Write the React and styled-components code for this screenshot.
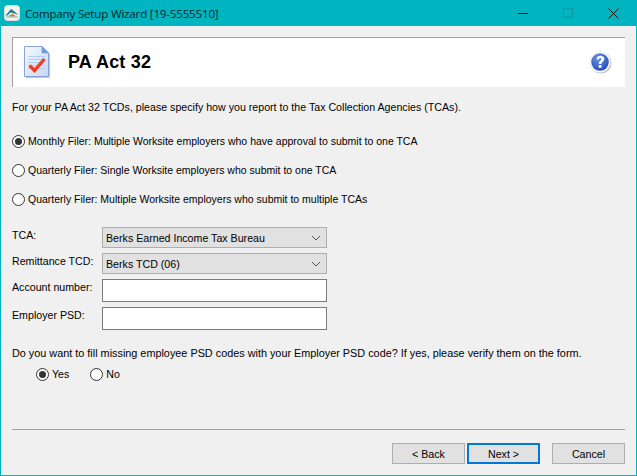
import React from 'react';
import styled, { createGlobalStyle } from 'styled-components';

const GlobalStyle = createGlobalStyle`
  html, body {
    margin: 0;
    padding: 0;
    background: #f0f0f0;
  }
`;

const filerOptions = [
  { label: 'Monthly Filer: Multiple Worksite employers who have approval to submit to one TCA', checked: true },
  { label: 'Quarterly Filer: Single Worksite employers who submit to one TCA' },
  { label: 'Quarterly Filer: Multiple Worksite employers who submit to multiple TCAs' },
];

const AppLogo = () => (
  <svg width="16" height="16" viewBox="0 0 16 16">
    <rect x="0.5" y="0.5" width="15" height="15" rx="3" fill="#f6f3ec" stroke="#d8dcd8" />
    <path d="M1.5 10.5 L7 4 L10 6 L14.5 10 L10.5 8.5 L6.5 7.5 L3.5 10.5 Z" fill="#1d7f9a" />
    <path d="M4.5 11 L8.5 8.8 L12.5 11.5 H5 Z" fill="#e8742a" />
    <path d="M2 11.5 H14 V12.5 H2 Z" fill="#7fb3c2" />
  </svg>
);

const PageIcon = () => (
  <svg width="27" height="33" viewBox="0 0 27 33">
    <defs>
      <linearGradient id="pageFill" x1="0" y1="0" x2="1" y2="1">
        <stop offset="0" stopColor="#f6faff" />
        <stop offset="1" stopColor="#c3d7f3" />
      </linearGradient>
    </defs>
    <path d="M0.5 0.5 H18 L24.5 7 V30.5 H0.5 Z" fill="url(#pageFill)" stroke="#88a4d8" strokeWidth="1" />
    <path d="M18 0.5 V7 H24.5 Z" fill="#6f9ee0" stroke="#6f93cf" strokeWidth="0.6" />
    <path d="M4 10.5 H21 M4 13.5 H21 M4 16.5 H21 M4 19.5 H21 M4 22.5 H21" stroke="#b5cdee" strokeWidth="1" />
    <path d="M5.5 19.5 L10.5 24.5 L20.5 13" fill="none" stroke="#ee3d22" strokeWidth="3.4" />
    <path d="M25.5 8 V31.5 H2" fill="none" stroke="#c4c4c4" strokeWidth="1" />
  </svg>
);

const HelpIcon = () => (
  <svg width="23" height="23" viewBox="0 0 23 23">
    <defs>
      <radialGradient id="helpFill" cx="0.4" cy="0.3" r="0.8">
        <stop offset="0" stopColor="#6d94e4" />
        <stop offset="1" stopColor="#1d46ae" />
      </radialGradient>
    </defs>
    <circle cx="12" cy="12" r="10.5" fill="#bcbcbc" />
    <circle cx="11" cy="11" r="10.5" fill="#fff" stroke="#dcdcdc" strokeWidth="0.5" />
    <circle cx="11" cy="11" r="8.8" fill="url(#helpFill)" />
    <path d="M7.6 8.2 C7.8 5.8 9.8 4.8 11.4 4.8 C13.8 4.8 15.3 6.2 15.3 8 C15.3 10.6 12.5 10.6 12.5 13 H9.8 C9.8 9.6 12.4 9.6 12.4 8.2 C12.4 7.5 11.9 7.1 11.2 7.1 C10.5 7.1 10 7.6 9.9 8.5 Z" fill="#fff" />
    <rect x="9.7" y="14" width="2.8" height="2.8" fill="#fff" />
  </svg>
);

const Chevron = () => (
  <svg width="10" height="6" viewBox="0 0 10 6">
    <path d="M1 1 L5 5 L9 1" fill="none" stroke="#555" strokeWidth="1" />
  </svg>
);

const Radio = ({ checked, children }) => (
  <RadioLabel>
    <RadioCircle $checked={checked} />
    <span>{children}</span>
  </RadioLabel>
);

const SelectField = ({ value }) => (
  <Select>
    <span>{value}</span>
    <Chevron />
  </Select>
);

const App = () => {
  return (
    <Window>
      <GlobalStyle />
      <TitleBar>
        <TitleLeft>
          <AppLogo />
          <TitleText>Company Setup Wizard [19-5555510]</TitleText>
        </TitleLeft>
        <WindowControls>
          <ControlButton>
            <svg width="11" height="11" viewBox="0 0 11 11"><path d="M0 5.5 H10" stroke="#111" strokeWidth="1" /></svg>
          </ControlButton>
          <ControlButton>
            <svg width="11" height="11" viewBox="0 0 11 11"><rect x="0.5" y="0.5" width="9" height="9" fill="none" stroke="#069aa5" /></svg>
          </ControlButton>
          <ControlButton>
            <svg width="11" height="11" viewBox="0 0 11 11"><path d="M0.5 0.5 L10.5 10.5 M10.5 0.5 L0.5 10.5" stroke="#111" strokeWidth="1" /></svg>
          </ControlButton>
        </WindowControls>
      </TitleBar>

      <Content>
        <Banner>
          <BannerLeft>
            <PageIcon />
            <BannerTitle>PA Act 32</BannerTitle>
          </BannerLeft>
          <HelpIcon />
        </Banner>

        <Intro>For your PA Act 32 TCDs, please specify how you report to the Tax Collection Agencies (TCAs).</Intro>

        <RadioStack>
          {filerOptions.map((option) => (
            <Radio key={option.label} checked={option.checked}>{option.label}</Radio>
          ))}
        </RadioStack>

        <FormGrid>
          <FieldLabel>TCA:</FieldLabel>
          <SelectField value="Berks Earned Income Tax Bureau" />
          <FieldLabel>Remittance TCD:</FieldLabel>
          <SelectField value="Berks TCD (06)" />
          <FieldLabel>Account number:</FieldLabel>
          <TextInput />
          <FieldLabel>Employer PSD:</FieldLabel>
          <TextInput />
        </FormGrid>

        <Question>Do you want to fill missing employee PSD codes with your Employer PSD code? If yes, please verify them on the form.</Question>
        <YesNoRow>
          <Radio checked>Yes</Radio>
          <Radio>No</Radio>
        </YesNoRow>

        <Footer>
          <Divider />
          <ButtonRow>
            <NavGroup>
              <WizardButton>&lt; Back</WizardButton>
              <WizardButton $primary>Next &gt;</WizardButton>
            </NavGroup>
            <WizardButton>Cancel</WizardButton>
          </ButtonRow>
        </Footer>
      </Content>
    </Window>
  );
};

const Window = styled.div`
  width: 637px;
  height: 476px;
  box-sizing: border-box;
  display: flex;
  flex-direction: column;
  overflow: hidden;
  background: #f0f0f0;
  border: 1px solid #00b4c0;
  border-top: 0;
  font-family: "Liberation Sans", Arial, sans-serif;
  font-size: 10.65px;
  color: #000;
`;

const TitleBar = styled.div`
  height: 26px;
  flex: none;
  display: flex;
  align-items: center;
  justify-content: space-between;
  background: #00b4c0;
`;

const TitleLeft = styled.div`
  display: flex;
  align-items: center;
  gap: 5px;
  padding-left: 3px;
`;

const TitleText = styled.span`
  font-family: "Open Sans", sans-serif;
  font-size: 11.6px;
  letter-spacing: -0.2px;
  color: #07262a;
`;

const WindowControls = styled.div`
  display: flex;
`;

const ControlButton = styled.div`
  width: 45px;
  height: 26px;
  display: flex;
  align-items: center;
  justify-content: center;
`;

const Content = styled.div`
  flex: 1;
  display: flex;
  flex-direction: column;
  padding: 11px 11px 11px;
`;

const Banner = styled.div`
  height: 50px;
  box-sizing: border-box;
  display: flex;
  align-items: center;
  justify-content: space-between;
  background: #fff;
  border-top: 1px solid #a0a0a0;
  border-left: 1px solid #a0a0a0;
  padding: 0 13px 0 11px;
`;

const BannerLeft = styled.div`
  display: flex;
  align-items: center;
  gap: 17px;
`;

const BannerTitle = styled.h1`
  margin: 0;
  font-size: 18px;
  font-weight: 700;
  letter-spacing: 0.2px;
`;

const Intro = styled.p`
  margin: 14px 0 0;
  line-height: 13px;
`;

const RadioStack = styled.div`
  display: flex;
  flex-direction: column;
  gap: 16px;
  margin-top: 21px;
  font-size: 10.5px;
`;

const RadioLabel = styled.label`
  display: flex;
  align-items: center;
  gap: 3px;
  height: 13px;
  line-height: 13px;
`;

const RadioCircle = styled.span`
  position: relative;
  width: 13px;
  height: 13px;
  flex: none;
  box-sizing: border-box;
  border: 1px solid #333;
  border-radius: 50%;
  background: #fff;

  &::after {
    content: '';
    display: ${(props) => (props.$checked ? 'block' : 'none')};
    position: absolute;
    inset: 2px;
    border-radius: 50%;
    background: #333;
  }
`;

const FormGrid = styled.div`
  display: grid;
  grid-template-columns: 90px 225px;
  grid-template-rows: 21px 21px 23px 23px;
  row-gap: 5px;
  margin-top: 21px;
`;

const FieldLabel = styled.div`
  line-height: 13px;
  padding-top: 2px;
`;

const Select = styled.div`
  box-sizing: border-box;
  display: flex;
  align-items: center;
  justify-content: space-between;
  padding: 0 5px 0 3px;
  background: #e1e1e1;
  border: 1px solid #adadad;
`;

const TextInput = styled.div`
  box-sizing: border-box;
  background: #fff;
  border: 1px solid #7a7a7a;
`;

const Question = styled.p`
  margin: 17px 0 0;
  line-height: 13px;
  font-size: 10.85px;
`;

const YesNoRow = styled.div`
  display: flex;
  gap: 21px;
  margin: 8px 0 0 24px;
`;

const Footer = styled.div`
  margin-top: auto;
`;

const Divider = styled.div`
  height: 1px;
  background: #a0a0a0;
`;

const ButtonRow = styled.div`
  display: flex;
  justify-content: flex-end;
  gap: 12px;
  margin-top: 13px;
`;

const NavGroup = styled.div`
  display: flex;
  gap: 2px;
`;

const WizardButton = styled.button`
  width: 73px;
  height: 21px;
  padding: 0;
  box-sizing: border-box;
  font-family: inherit;
  font-size: inherit;
  color: #000;
  background: #e1e1e1;
  border: ${(props) => (props.$primary ? '2px solid #0078d7' : '1px solid #adadad')};
`;

export default App;
